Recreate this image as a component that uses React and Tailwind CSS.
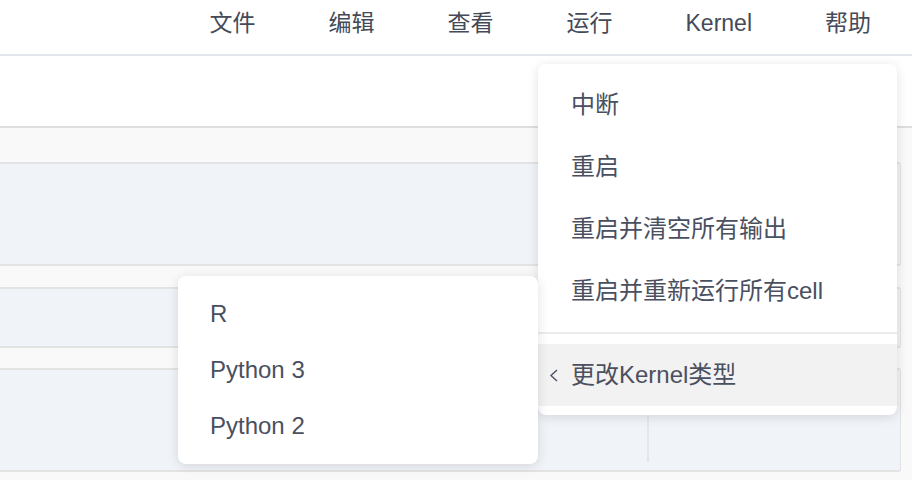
const font = '"Liberation Sans", "Noto Sans CJK SC", sans-serif';

const menubar = ['文件', '编辑', '查看', '运行', 'Kernel', '帮助'];
const kernelItems = ['中断', '重启', '重启并清空所有输出', '重启并重新运行所有cell'];
const kernelTypes = ['R', 'Python 3', 'Python 2'];

export default function App() {
  return (
    <div
      className="relative h-[480px] w-[912px] overflow-hidden bg-[#f9f9f9] text-[#4a5060]"
      style={{ fontFamily: font }}
    >
      {/* top menubar */}
      <header className="flex h-[56px] items-center justify-end gap-[73px] border-b-2 border-[#e3e7ec] bg-white pr-[41px] pb-[7px] text-[23px] text-[#444a58]">
        {menubar.map((m) => (
          <span key={m} className="leading-none">{m}</span>
        ))}
      </header>

      {/* toolbar */}
      <div className="h-[72px] border-b-2 border-[#dedede] bg-white" />

      {/* notebook cells */}
      <div className="flex flex-col pt-[34px] pr-[11px]">
        <div className="h-[104px] rounded-r-[3px] border-y-2 border-r border-[#e3e3e3] bg-[#f0f3f8]" />
        <div className="mt-[21px] h-[61px] rounded-r-[3px] border-y-2 border-r border-[#e3e3e3] bg-[#f0f3f8]" />
        <div className="mt-[20px] flex h-[104px] rounded-r-[3px] border-y-2 border-r border-[#e3e3e3] bg-[#f0f3f8] py-[8px]">
          <div className="w-[647px]" />
          <div className="flex-1 border-l-2 border-[#e4e6ea]" />
        </div>
      </div>

      {/* Kernel dropdown */}
      <div className="absolute left-[538px] top-[64px] w-[359px] rounded-[8px] bg-white pt-[10px] pb-[9px] shadow-[0_2px_12px_rgba(0,0,0,0.12)]">
        {kernelItems.map((it) => (
          <div key={it} className="flex h-[62px] items-center pl-[33px] text-[24px]">
            {it}
          </div>
        ))}
        <div className="my-[10px] h-[2px] bg-[#ececec]" />
        <div className="flex h-[62px] items-center bg-[#f2f2f2] pl-[11px] text-[24px]">
          <svg width="10" height="13" viewBox="0 0 10 13" fill="none">
            <polyline points="8,1 2,6.5 8,12" stroke="#50566a" strokeWidth="1.5" />
          </svg>
          <span className="ml-[12px]">更改Kernel类型</span>
        </div>
      </div>

      {/* kernel type submenu */}
      <div className="absolute left-[178px] top-[276px] w-[360px] rounded-[8px] bg-white py-[10px] shadow-[0_2px_12px_rgba(0,0,0,0.12)]">
        {kernelTypes.map((k) => (
          <div key={k} className="flex h-[56px] items-center pl-[32px] text-[24px]">
            {k}
          </div>
        ))}
      </div>
    </div>
  );
}
